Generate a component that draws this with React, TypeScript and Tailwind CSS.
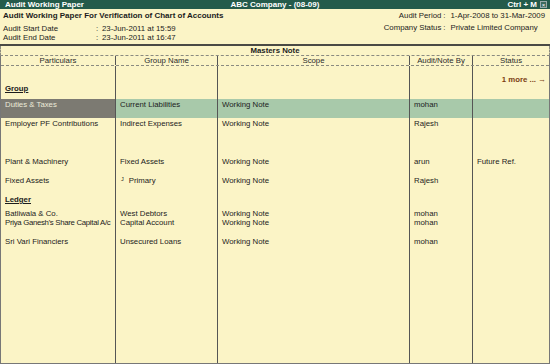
import React from 'react';

type Cell = React.ReactNode;

const cols = 'grid grid-cols-[115px_102px_192px_63px_1fr]';

const Row = ({
  cells,
  h,
  pt = 'pt-[1px]',
  highlight = false,
  grow = false,
}: {
  cells: Cell[];
  h?: string;
  pt?: string;
  highlight?: boolean;
  grow?: boolean;
}) => (
  <div className={`${cols} ${grow ? 'flex-1' : h}`}>
    {cells.map((c, i) => {
      let bg = '';
      if (highlight) bg = i === 0 ? 'bg-[#7c7a72] text-[#ecebd9]' : 'bg-[#a8c9aa]';
      return (
        <div
          key={i}
          className={`${i < 4 ? 'border-r border-[#555]' : ''} ${bg} ${pt} pl-[4px] overflow-hidden whitespace-nowrap`}
        >
          {c}
        </div>
      );
    })}
  </div>
);

export default function App() {
  return (
    <div className="w-[550px] h-[364px] bg-[#fbf4c6] flex flex-col text-[7.8px] leading-[9px] text-[#1c1c1c] font-['Liberation_Sans',Arial,sans-serif]">
      {/* title bar */}
      <div className="h-[9px] bg-[#245b4b] grid grid-cols-3 items-center text-white font-bold text-[8px] leading-[9px]">
        <div className="pl-[5px]">Audit Working Paper</div>
        <div className="text-center">ABC Company - (08-09)</div>
        <div className="flex justify-end items-center pr-[3px] gap-[3px]">
          <span>Ctrl + M</span>
          <span className="w-[7px] h-[7px] border border-[#9aa] bg-[#3d6b5d] flex items-center justify-center text-[6px] leading-[6px] font-normal">
            ×
          </span>
        </div>
      </div>

      {/* header */}
      <div className="h-[35px] flex justify-between px-[3px] pt-[2px]">
        <div className="flex flex-col">
          <div className="font-bold text-[8px]">Audit Working Paper For Verification of Chart of Accounts</div>
          <div className="flex mt-[3.5px]">
            <span className="w-[93px]">Audit Start Date</span>
            <span className="w-[6px]">:</span>
            <span>23-Jun-2011 at 15:59</span>
          </div>
          <div className="flex">
            <span className="w-[93px]">Audit End Date</span>
            <span className="w-[6px]">:</span>
            <span>23-Jun-2011 at 16:47</span>
          </div>
        </div>
        <div className="grid grid-cols-[auto_auto_auto] gap-y-[2.5px] pr-[2px] h-fit">
          <span className="text-right">Audit Period</span>
          <span className="pl-[2px] pr-[5px]">:</span>
          <span>1-Apr-2008 to 31-Mar-2009</span>
          <span className="text-right">Company Status</span>
          <span className="pl-[2px] pr-[5px]">:</span>
          <span>Private Limited Company</span>
        </div>
      </div>

      {/* table */}
      <div className="flex-1 flex flex-col border-t-2 border-[#4a4a44]">
        <div className="h-[10px] text-center font-bold border-b border-dashed border-[#8a8a80] border-x border-x-[#8a8a80]">
          Masters Note
        </div>
        <div className="flex-1 flex flex-col border-x border-b border-[#777]">
          <div className={`${cols} h-[10px] border-b border-dashed border-[#8a8a80] text-center text-[#2a2a2a]`}>
            <div className="border-r border-[#555]">Particulars</div>
            <div className="border-r border-[#555]">Group Name</div>
            <div className="border-r border-[#555]">Scope</div>
            <div className="border-r border-[#555]">Audit/Note By</div>
            <div>Status</div>
          </div>
          <Row
            h="h-[18px]"
            pt="pt-[9px]"
            cells={[
              '',
              '',
              '',
              '',
              <div className="text-right pr-[3px] font-bold text-[#7a3d12]">1 more ... →</div>,
            ]}
          />
          <Row
            h="h-[15px]"
            pt="pt-[0px]"
            cells={[<span className="font-bold underline">Group</span>, '', '', '', '']}
          />
          <Row
            h="h-[19px]"
            highlight
            cells={['Duties & Taxes', 'Current Liabilities', 'Working Note', 'mohan', '']}
          />
          <Row
            h="h-[38px]"
            cells={['Employer PF Contributions', 'Indirect Expenses', 'Working Note', 'Rajesh', '']}
          />
          <Row
            h="h-[19px]"
            cells={['Plant & Machinery', 'Fixed Assets', 'Working Note', 'arun', 'Future Ref.']}
          />
          <Row
            h="h-[19px]"
            cells={[
              'Fixed Assets',
              <span>
                <span className="text-[5.5px] align-top relative top-[-1px] pl-[1px] pr-[5px]">J</span>Primary
              </span>,
              'Working Note',
              'Rajesh',
              '',
            ]}
          />
          <Row
            h="h-[14px]"
            cells={[<span className="font-bold underline">Ledger</span>, '', '', '', '']}
          />
          <Row
            h="h-[28px]"
            cells={[
              <div>
                <div>Batliwala &amp; Co.</div>
                <div className="tracking-[-0.3px]">Priya Ganesh's Share Capital A/c</div>
              </div>,
              <div>
                <div>West Debtors</div>
                <div>Capital Account</div>
              </div>,
              <div>
                <div>Working Note</div>
                <div>Working Note</div>
              </div>,
              <div>
                <div>mohan</div>
                <div>mohan</div>
              </div>,
              '',
            ]}
          />
          <Row
            grow
            cells={['Sri Vari Financiers', 'Unsecured Loans', 'Working Note', 'mohan', '']}
          />
        </div>
      </div>
    </div>
  );
}
